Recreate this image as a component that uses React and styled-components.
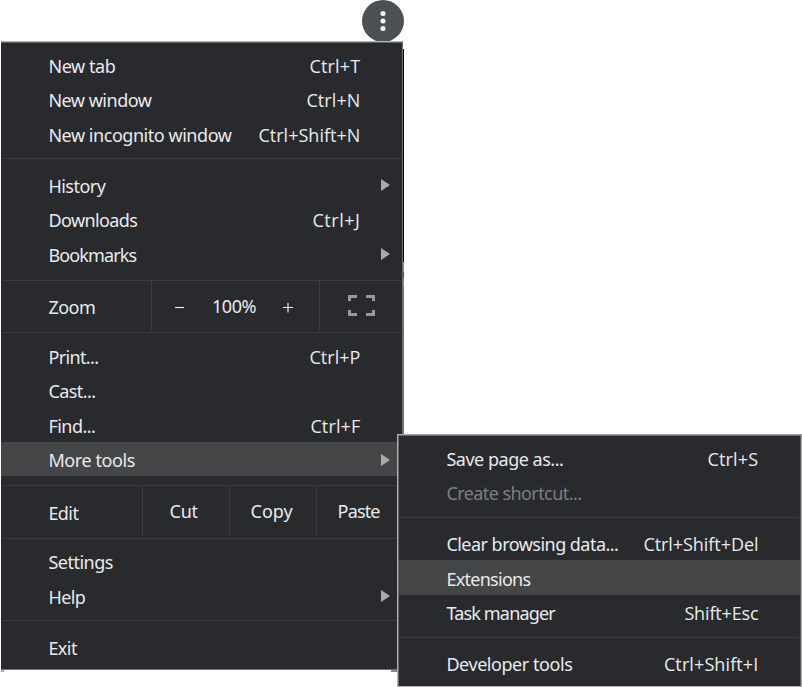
import React, { useLayoutEffect, useRef, useState } from "react";
import styled, { createGlobalStyle } from "styled-components";

const GlobalStyle = createGlobalStyle`
  body {
    margin: 0;
    background: #fff;
    overflow: hidden;
    font-family: "Noto Sans", "Open Sans", sans-serif;
    font-size: 18px;
    color: #e8eaed;
  }
`;

const Stage = styled.div`
  position: relative;
  width: 802px;
  height: 687px;
  box-sizing: border-box;
  padding-left: 1px;
`;

const Toolbar = styled.div`
  height: 41px;
  display: flex;
  padding-left: 361px;
`;

const MenuButton = styled.button`
  width: 42px;
  height: 42px;
  flex: none;
  padding: 0;
  border: 0;
  border-radius: 50%;
  background: #4c5052;
  display: flex;
`;

const MainMenu = styled.nav`
  position: relative;
  box-sizing: border-box;
  width: 402px;
  height: 629px;
  border-top: 1px solid #b4b4b5;
  border-right: 1px solid #6e6e70;
  border-bottom: 1px solid #747478;
  background: #292a2d;
  box-shadow: inset 0 1px 0 #606265;
  padding-top: 1px;

  &::before,
  &::after {
    content: "";
    position: absolute;
    top: 628px;
    height: 2px;
  }
  &::before {
    left: 0;
    width: 3px;
    background: #a9a9ab;
  }
  &::after {
    left: 390px;
    width: 6px;
    background: #88888b;
  }
`;

const EdgeShadow = styled.i`
  position: absolute;
  top: 7px;
  left: 402px;
  width: 1px;
  height: 386px;
  background: linear-gradient(#060606 0 213px, #8a8a8a 213px 223px, #4a4a4a 223px 229px, #8a8a8a 229px 238px, #707070 238px);
`;

const SubMenu = styled.nav`
  position: absolute;
  left: 397px;
  top: 434px;
  box-sizing: border-box;
  width: 405px;
  height: 253px;
  border: 1px solid #b0b1b3;
  border-top-color: #a5a6a8;
  border-right-color: #a9aaac;
  box-shadow: inset 1px 1px 0 #66686a, inset -1px 0 0 #5c5d60;
  background: #292a2d;
  padding: 1px 1px 0 1px;
`;

const Section = styled.div`
  padding: ${(p) => p.$top}px 0 ${(p) => p.$bottom}px;
`;

const Divider = styled.hr`
  height: 1px;
  margin: 0 1px;
  border: 0;
  background: #3b3c3f;
`;

const Row = styled.div`
  height: ${(p) => p.$h || 34}px;
  display: flex;
  justify-content: space-between;
  box-sizing: border-box;
  padding: ${(p) => p.$drop || 0}px ${(p) => p.$right}px 0 47.4px;
  line-height: 37px;
  background: ${(p) => (p.$active ? "#454647" : "transparent")};
  color: ${(p) => (p.$disabled ? "#7b7e82" : "inherit")};
`;

const Text = styled.span`
  display: block;
  width: ${(p) => p.$w}px;
  white-space: nowrap;
`;

const Shortcut = styled.span`
  font-family: "Open Sans", "Noto Sans", sans-serif;
`;

const Arrow = styled.i`
  margin: ${(p) => (p.$low ? 12 : 11)}px 0 0 auto;
  width: 0;
  height: 0;
  border-left: 9px solid #a9aaad;
  border-top: 6px solid transparent;
  border-bottom: 6px solid transparent;
`;

const Controls = styled.div`
  display: grid;
  grid-template-columns: ${(p) => p.$columns};
  height: ${(p) => p.$h}px;
`;

const Cell = styled.div`
  display: flex;
  height: ${(p) => p.$h}px;
  margin-top: ${(p) => p.$mt || 0}px;
  box-sizing: border-box;
  padding-left: ${(p) => p.$pad}px;
  padding-top: ${(p) => p.$top}px;
  line-height: 37px;
  border-left: ${(p) => (p.$line ? "1px solid #3b3c3f" : "0")};
`;

const ZoomCell = styled(Cell)`
  justify-content: space-between;
  padding: 7px 26px 0 23px;
`;

const Glyph = styled.svg`
  width: 10px;
  height: 10px;
  margin-top: 15px;
  stroke: #e8eaed;
  stroke-width: 1.2;
`;

/* Spreads its letters so that the label takes exactly `w` pixels. */
function Label({ w, children }) {
  const ref = useRef(null);
  const [spacing, setSpacing] = useState(0);
  useLayoutEffect(() => {
    const node = ref.current;
    node.style.letterSpacing = "0px";
    const range = document.createRange();
    range.selectNodeContents(node);
    const natural = range.getBoundingClientRect().width;
    const next = (w - natural) / children.length;
    node.style.letterSpacing = `${next}px`;
    setSpacing(next);
  }, [w, children]);
  return (
    <Text ref={ref} $w={w} style={{ letterSpacing: spacing }}>
      {children}
    </Text>
  );
}

function Item({ label, w, keys, kw, h, arrow, low, active, disabled, drop }) {
  return (
    <Row $h={h} $right={arrow ? 12 : 41.6} $drop={drop} $active={active} $disabled={disabled}>
      <Label w={w}>{label}</Label>
      {keys && (
        <Shortcut>
          <Label w={kw}>{keys}</Label>
        </Shortcut>
      )}
      {arrow && <Arrow $low={low} />}
    </Row>
  );
}

export default function App() {
  return (
    <Stage>
      <GlobalStyle />
      <Toolbar>
        <MenuButton aria-label="Menu">
          <svg width="42" height="42" fill="#fff">
            <circle cx="21" cy="13.5" r="2.5" />
            <circle cx="21" cy="21" r="2.5" />
            <circle cx="21" cy="28.5" r="2.5" />
          </svg>
        </MenuButton>
      </Toolbar>
      <MainMenu>
        <EdgeShadow />
        <Section $top={5} $bottom={7}>
          <Item label="New tab" w={67} keys="Ctrl+T" kw={51} />
          <Item label="New window" w={103} keys="Ctrl+N" kw={54} h={35} />
          <Item label="New incognito window" w={183} keys="Ctrl+Shift+N" kw={102} />
        </Section>
        <Divider />
        <Section $top={9} $bottom={9}>
          <Item label="History" w={57} arrow />
          <Item label="Downloads" w={89} keys="Ctrl+J" kw={48} h={35} />
          <Item label="Bookmarks" w={88} arrow />
        </Section>
        <Divider />
        <Controls $h={51} $columns="150px 168px 1fr">
          <Cell $pad={47.4} $top={8}>
            <Label w={47}>Zoom</Label>
          </Cell>
          <ZoomCell $line $h={50}>
            <Glyph>
              <path d="M0 4.500h9" />
            </Glyph>
            <Label w={44}>100%</Label>
            <Glyph>
              <path d="M0 4.500h10M5 0v9.500" />
            </Glyph>
          </ZoomCell>
          <Cell $line $h={50} $pad={28} $top={14}>
            <svg width="27" height="21" fill="none" stroke="#97989a" strokeWidth="3">
              <path d="M1.5 6V1.5H9M18 1.5h7.500V6M25.500 15v4.500H18M9 19.500H1.500V15" />
            </svg>
          </Cell>
        </Controls>
        <Divider />
        <Section $top={6} $bottom={9}>
          <Item label="Print..." w={50} keys="Ctrl+P" kw={51} />
          <Item label="Cast..." w={47} h={35} />
          <Item label="Find..." w={47} keys="Ctrl+F" kw={50} />
          <Item label="More tools" w={86.5} arrow low active />
        </Section>
        <Divider />
        <Controls $h={52} $columns="141px 87px 87px 1fr">
          <Cell $pad={47.4} $top={9}>
            <Label w={30}>Edit</Label>
          </Cell>
          <Cell $line $h={49} $mt={1} $pad={26.6} $top={6}>
            <Label w={28}>Cut</Label>
          </Cell>
          <Cell $line $h={49} $mt={1} $pad={20.6} $top={6}>
            <Label w={42}>Copy</Label>
          </Cell>
          <Cell $line $h={49} $mt={1} $pad={20.6} $top={6}>
            <Label w={42}>Paste</Label>
          </Cell>
        </Controls>
        <Divider />
        <Section $top={5} $bottom={7}>
          <Item label="Settings" w={64.5} h={35} />
          <Item label="Help" w={37} arrow />
        </Section>
        <Divider />
        <Section $top={9} $bottom={5}>
          <Item label="Exit" w={28.5} />
        </Section>
      </MainMenu>
      <SubMenu>
        <Section $top={5} $bottom={8}>
          <Item label="Save page as..." w={117} keys="Ctrl+S" kw={51} />
          <Item label="Create shortcut..." w={135} disabled />
        </Section>
        <Divider />
        <Section $top={8} $bottom={8}>
          <Item label="Clear browsing data..." w={172} keys="Ctrl+Shift+Del" kw={115} />
          <Item label="Extensions" w={84} h={35} drop={1} active />
          <Item label="Task manager" w={108.5} keys="Shift+Esc" kw={74} />
        </Section>
        <Divider />
        <Section $top={8} $bottom={6}>
          <Item label="Developer tools" w={126} keys="Ctrl+Shift+I" kw={94.5} />
        </Section>
      </SubMenu>
    </Stage>
  );
}
